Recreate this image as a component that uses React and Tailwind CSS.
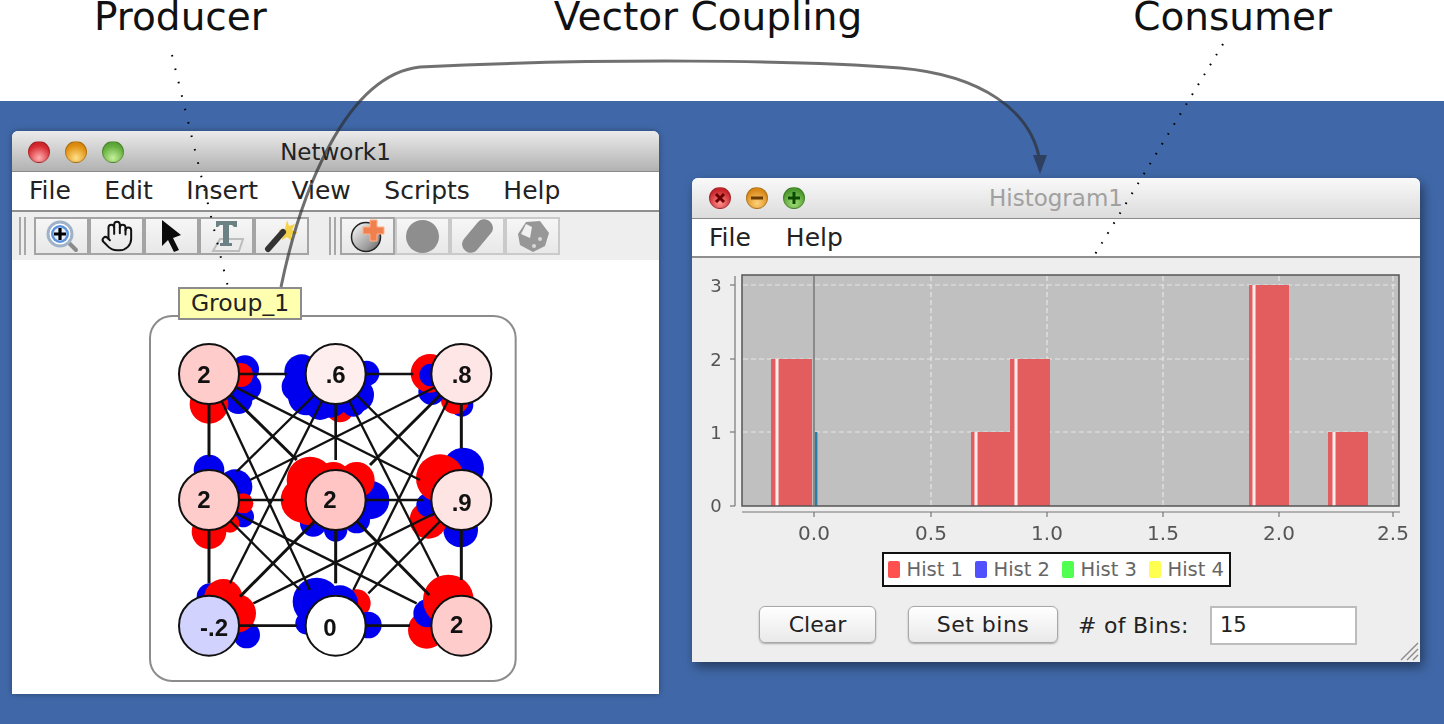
import React from "react";
import { Hand } from "lucide-react";

// node centres and drawing below are all in a 3x coordinate space (viewBox 1170x1140)
const nodes = [
  { x: 207, y: 192, fill: "#ffcccc", label: "2", tx: 192, ty: 218 },
  { x: 587, y: 192, fill: "#ffeeee", label: ".6", tx: 587, ty: 218 },
  { x: 964, y: 192, fill: "#ffe6e6", label: ".8", tx: 965, ty: 218 },
  { x: 207, y: 570, fill: "#ffcccc", label: "2", tx: 192, ty: 595 },
  { x: 587, y: 570, fill: "#ffc4c4", label: "2", tx: 570, ty: 595 },
  { x: 964, y: 570, fill: "#ffe4e4", label: ".9", tx: 965, ty: 602 },
  { x: 207, y: 947, fill: "#d2d2ff", label: "-.2", tx: 222, ty: 978 },
  { x: 587, y: 947, fill: "#ffffff", label: "0", tx: 570, ty: 978 },
  { x: 964, y: 947, fill: "#ffcccc", label: "2", tx: 950, ty: 970 },
];

const R = "#ff0000";
const B = "#0000ee";

const blobs = [
  [B, 315, 178, 42], [B, 322, 232, 42], [B, 295, 270, 42], [R, 303, 195, 36], [R, 207, 283, 58],
  [R, 600, 295, 42], [B, 485, 185, 52], [B, 470, 230, 45], [B, 500, 260, 56], [B, 540, 285, 45], [B, 570, 265, 58], [B, 640, 285, 35], [B, 650, 255, 52], [B, 680, 190, 38],
  [B, 965, 285, 35], [R, 945, 270, 42], [B, 875, 245, 40], [R, 870, 190, 58], [B, 872, 195, 34],
  [B, 207, 480, 46], [B, 285, 530, 52], [B, 310, 620, 32], [R, 310, 580, 30], [R, 270, 640, 28], [R, 207, 665, 52],
  [B, 690, 570, 58], [B, 520, 640, 40], [B, 587, 660, 35], [B, 650, 630, 40], [R, 510, 510, 70], [R, 490, 570, 68], [R, 505, 595, 50], [R, 650, 510, 54], [R, 580, 510, 54],
  [B, 970, 475, 62], [B, 962, 660, 52], [R, 865, 630, 56], [B, 865, 585, 36], [R, 900, 505, 72],
  [B, 210, 860, 40], [B, 320, 975, 40], [R, 250, 865, 58], [R, 290, 910, 58],
  [R, 650, 880, 42], [B, 530, 875, 72], [B, 600, 880, 54], [B, 500, 940, 34], [B, 685, 945, 40],
  [R, 860, 960, 56], [B, 862, 910, 42], [R, 925, 870, 76],
];

// x1, y1, x2, y2, width
const edges = [
  [207, 192, 440, 192, 8], [587, 192, 820, 192, 8], [207, 570, 430, 570, 8], [587, 570, 850, 570, 8],
  [207, 947, 470, 947, 8], [587, 947, 810, 947, 8], [207, 192, 207, 440, 9], [207, 570, 207, 820, 9],
  [587, 192, 587, 450, 8], [587, 570, 587, 820, 9], [964, 192, 964, 415, 9], [964, 570, 964, 810, 9],
  [207, 192, 470, 450, 9], [207, 192, 840, 510, 7], [207, 192, 510, 840, 7], [587, 192, 290, 485, 7],
  [587, 192, 835, 440, 7], [587, 192, 270, 820, 7], [587, 192, 895, 800, 7], [964, 192, 330, 510, 7],
  [964, 192, 690, 465, 9], [964, 192, 640, 840, 7], [207, 570, 480, 840, 7], [207, 570, 830, 880, 7],
  [587, 570, 300, 860, 9], [587, 570, 868, 855, 9], [964, 570, 340, 880, 7], [964, 570, 685, 850, 7],
];

const bars = [
  { x: 771, w: 41, top: 359, stripe: 776 },
  { x: 971, w: 39, top: 432, stripe: 975 },
  { x: 1010, w: 40, top: 359, stripe: 1015 },
  { x: 1249, w: 40, top: 285, stripe: 1253 },
  { x: 1328, w: 40, top: 432, stripe: 1333 },
];

const xTicks = [
  [814, "0.0"], [931, "0.5"], [1047, "1.0"], [1163, "1.5"], [1279, "2.0"], [1393, "2.5"],
];
const yTicks = [[285, "3", 292], [359, "2", 366], [432, "1", 439], [506, "0", 512]];

const legend = [
  ["Hist 1", "bg-[#ff5050]"], ["Hist 2", "bg-[#5050ff]"], ["Hist 3", "bg-[#50ff50]"], ["Hist 4", "bg-[#ffff50]"],
];

const Network = () => (
  <svg viewBox="0 0 1170 1140" className="w-[390px] h-[380px] blur-[0.4px]">
    <rect x="30" y="18" width="1097" height="1095" rx="66" fill="#fff" stroke="#8c8c8c" strokeWidth="6" />
    {blobs.map(([c, x, y, r], i) => <circle key={i} cx={x} cy={y} r={r} fill={c} />)}
    {edges.map(([x1, y1, x2, y2, w], i) => <line key={i} x1={x1} y1={y1} x2={x2} y2={y2} stroke="#111" strokeWidth={w} />)}
    {nodes.map((n, i) => (
      <g key={i}>
        <circle cx={n.x} cy={n.y} r="90" fill={n.fill} stroke="#111" strokeWidth="6" />
        <text x={n.tx} y={n.ty} textAnchor="middle" fontSize="72" fontWeight="700" fill="#111" fontFamily="'Liberation Sans', sans-serif">{n.label}</text>
      </g>
    ))}
  </svg>
);

const Plot = () => (
  <svg viewBox="692 258 728 292" className="w-[728px] h-[292px] blur-[0.4px]" fontFamily="'DejaVu Sans', sans-serif">
    <rect x="742" y="275" width="657" height="231" fill="#c0c0c0" />
    {[285, 359, 432].map((y) => <line key={y} x1="743" x2="1398" y1={y} y2={y} stroke="#e6e6e6" strokeWidth="1.2" strokeDasharray="5 3" />)}
    {[931, 1047, 1163, 1279, 1393].map((x) => <line key={x} x1={x} x2={x} y1="276" y2="505" stroke="#e6e6e6" strokeWidth="1.2" strokeDasharray="5 3" />)}
    <line x1="814" x2="814" y1="276" y2="505" stroke="#666" strokeWidth="1.2" />
    {bars.map((b) => (
      <g key={b.x}>
        <rect x={b.x} y={b.top} width={b.w} height={506 - b.top} fill="#e35d5f" />
        <rect x={b.stripe - 1} y={b.top} width="4" height={506 - b.top} fill="#f0a8a8" />
        <rect x={b.stripe} y={b.top} width="2" height={506 - b.top} fill="#fdecec" />
      </g>
    ))}
    <rect x="815" y="432" width="2.4" height="74" fill="#2a7fa8" />
    <rect x="742" y="275" width="657" height="231" fill="none" stroke="#555" strokeWidth="1.5" />
    <line x1="735" x2="735" y1="276" y2="506" stroke="#777" strokeWidth="1.2" />
    <line x1="742" x2="1400" y1="512" y2="512" stroke="#777" strokeWidth="1.2" />
    {yTicks.map(([y, t, by]) => (
      <g key={t}>
        <line x1="730" x2="735" y1={y} y2={y} stroke="#777" strokeWidth="1.2" />
        <text x="716" y={by} textAnchor="middle" fontSize="18" fill="#555">{t}</text>
      </g>
    ))}
    {xTicks.map(([x, t]) => (
      <g key={t}>
        <line x1={x} x2={x} y1="512" y2="517" stroke="#777" strokeWidth="1.2" />
        <text x={x} y="540" textAnchor="middle" fontSize="20" fill="#555">{t}</text>
      </g>
    ))}
  </svg>
);

const ToolButton = ({ dim, children }) => (
  <div className={`w-[55px] h-[38px] border-2 flex items-center justify-center bg-gradient-to-b from-[#f6f6f6] to-[#e8e8e8] ${dim ? "border-[#cacaca]" : "border-[#a4a4a4]"}`}>
    {children}
  </div>
);

const Grip = () => (
  <div className="flex gap-[3px] h-[38px] mr-[8px]">
    <div className="w-[2px] bg-[#a8a8a8]" />
    <div className="w-[2px] bg-[#a8a8a8]" />
  </div>
);

const Light = ({ className, children }) => (
  <div className={`w-[22px] h-[22px] rounded-full border border-black/20 flex items-center justify-center ${className}`}>
    {children}
  </div>
);

const TitleBar = ({ title, lights, className, textClass }) => (
  <div className={`relative h-[41px] rounded-t-[6px] border-b border-[#8a8a8a] flex items-center ${className}`}>
    {lights}
    <span className={`absolute inset-x-0 text-center text-[23px] ${textClass}`}>{title}</span>
  </div>
);

const App = () => {
  return (
    <div className="relative w-[1444px] h-[724px] overflow-hidden bg-white font-['DejaVu_Sans',sans-serif]">
      <header className="h-[101px] flex items-start text-[39px] leading-[34px] text-[#111]">
        <span className="ml-[94px]">Producer</span>
        <span className="ml-[287px]">Vector Coupling</span>
        <span className="ml-[271px]">Consumer</span>
      </header>

      <main className="h-[623px] bg-[#4068a8] flex items-start pl-[12px] pt-[30px] gap-[33px]">
        <section className="w-[647px] h-[563px] flex flex-col bg-white shadow-[0_0_6px_rgba(0,0,0,0.35)] rounded-t-[6px]">
          <TitleBar
            title="Network1"
            className="bg-gradient-to-b from-[#ebebeb] to-[#b2b2b2]"
            textClass="text-[#222] pt-[2px]"
            lights={
              <div className="flex gap-[15px] pl-[16px] pt-[1px]">
                <Light className="bg-[radial-gradient(circle_at_50%_80%,#ffb0b0,#d62a30_65%,#b81e24)]" />
                <Light className="bg-[radial-gradient(circle_at_50%_80%,#ffe08a,#e0900f_65%,#c47c0c)]" />
                <Light className="bg-[radial-gradient(circle_at_50%_80%,#c6f09a,#62ad3c_65%,#4c9530)]" />
              </div>
            }
          />
          <nav className="h-[40px] border-b-2 border-[#8f8f8f] flex items-center gap-[33.5px] pl-[17px] text-[25px] text-[#222]">
            <span>File</span><span>Edit</span><span>Insert</span><span>View</span><span>Scripts</span><span>Help</span>
          </nav>
          <div className="h-[48px] bg-[#eeeeee] flex items-start pt-[5px] pl-[7px]">
            <Grip />
            <div className="flex">
              <ToolButton>
                <svg width="34" height="34" viewBox="0 0 34 34">
                  <line x1="22" y1="22" x2="31" y2="31" stroke="#8a8a8a" strokeWidth="4" strokeLinecap="round" />
                  <circle cx="15" cy="15" r="12" fill="#fff" stroke="#9fb2c8" strokeWidth="3" />
                  <circle cx="15" cy="15" r="9" fill="#5c93dc" />
                  <circle cx="15" cy="15" r="6.5" fill="#e8f0fb" />
                  <path d="M15 9v12M9 15h12" stroke="#000" strokeWidth="3.2" />
                </svg>
              </ToolButton>
              <ToolButton>
                <Hand size={34} strokeWidth={1.4} color="#111" />
              </ToolButton>
              <ToolButton>
                <svg width="26" height="34" viewBox="0 0 26 34">
                  <path d="M3 1 22 16 14 19 20 31 15 33 9 21 3 27Z" fill="#0b0b0b" />
                </svg>
              </ToolButton>
              <ToolButton>
                <svg width="36" height="34" viewBox="0 0 36 34">
                  <path d="M11 20h23l-4 12H4Z" fill="#ececec" stroke="#bdbdbd" strokeWidth="2" />
                  <path d="M7 2h21v6h-3l-2-2h-3v18h3v3H11v-3h3V6h-3L9 8H7Z" fill="#6c8184" />
                </svg>
              </ToolButton>
              <ToolButton>
                <svg width="36" height="34" viewBox="0 0 36 34">
                  <path d="M23 1l2 6 6-2-3 6 6 3-7 2 1 6-5-4-5 3 1-7-5-3 7-1Z" fill="#f3d24a" />
                  <path d="M4 30 19 13" stroke="#333" strokeWidth="6" strokeLinecap="round" />
                </svg>
              </ToolButton>
            </div>
            <div className="ml-[20px] flex">
              <Grip />
            </div>
            <div className="flex -ml-[4px]">
              <ToolButton>
                <svg width="36" height="34" viewBox="0 0 36 34">
                  <defs>
                    <linearGradient id="sph" x1="0" y1="0" x2="1" y2="1">
                      <stop offset="0" stopColor="#fff" />
                      <stop offset="0.7" stopColor="#999" />
                      <stop offset="1" stopColor="#555" />
                    </linearGradient>
                  </defs>
                  <circle cx="16" cy="18" r="14.5" fill="url(#sph)" stroke="#222" strokeWidth="1.5" />
                  <path d="M20 1h7v7h7v7h-7v7h-7v-7h-7V8h7Z" fill="#f0814f" stroke="#ffb089" strokeWidth="1" />
                </svg>
              </ToolButton>
              <ToolButton dim>
                <div className="w-[33px] h-[33px] rounded-full bg-[#8e8e8e]" />
              </ToolButton>
              <ToolButton dim>
                <div className="w-[17px] h-[38px] -my-2 rounded-[8px] rotate-[40deg] bg-[#8e8e8e]" />
              </ToolButton>
              <ToolButton dim>
                <svg width="34" height="34" viewBox="0 0 34 34">
                  <path d="M10 3 24 2 33 14 29 27 17 33 4 26 2 15Z" fill="#979797" />
                  <path d="M10 5 16 8 14 19 5 15Z" fill="#f0f0f0" />
                  <circle cx="24" cy="20" r="2" fill="#d8d8d8" />
                  <circle cx="18" cy="27" r="2" fill="#d8d8d8" />
                </svg>
              </ToolButton>
            </div>
          </div>
          <div className="relative flex-1 pl-[128px] pt-[50px] overflow-hidden">
            <Network />
            <div className="absolute left-[166px] top-[27px] w-[124px] h-[33px] bg-[#ffffb0] border-2 border-[#8c8c8c] flex items-center justify-center text-[23.5px] text-[#222]">
              Group_1
            </div>
          </div>
        </section>

        <section className="relative mt-[47px] w-[728px] h-[484px] flex flex-col bg-[#eeeeee] rounded-t-[6px] shadow-[3px_5px_12px_rgba(0,0,0,0.45)]">
          <TitleBar
            title="Histogram1"
            className="bg-gradient-to-b from-[#f9f9f9] to-[#dcdcdc]"
            textClass="text-[#a0a0a0]"
            lights={
              <div className="flex gap-[15px] pl-[17px]">
                <Light className="bg-[radial-gradient(circle_at_50%_75%,#ff8f8f,#c9262c_70%)]">
                  <svg width="12" height="12" viewBox="0 0 12 12"><path d="M2 2l8 8M10 2l-8 8" stroke="#6b0000" strokeWidth="3" /></svg>
                </Light>
                <Light className="bg-[radial-gradient(circle_at_50%_75%,#ffd27a,#d98a1a_70%)]">
                  <svg width="14" height="12" viewBox="0 0 14 12"><path d="M1 6h12" stroke="#6b3a00" strokeWidth="3" /></svg>
                </Light>
                <Light className="bg-[radial-gradient(circle_at_50%_75%,#a5e07a,#4c9a2e_70%)]">
                  <svg width="14" height="14" viewBox="0 0 14 14"><path d="M7 1v12M1 7h12" stroke="#0c4a00" strokeWidth="3" /></svg>
                </Light>
              </div>
            }
          />
          <nav className="h-[39px] bg-white border-b-2 border-[#8f8f8f] flex items-center gap-[35px] pl-[17px] text-[25px] text-[#222]">
            <span>File</span><span>Help</span>
          </nav>
          <Plot />
          <div className="mt-[2px] flex justify-center">
            <div className="w-[349px] h-[35px] bg-white border-2 border-[#111] flex items-center pl-[4px] text-[19.5px] text-[#666]">
              {legend.map(([name, color]) => (
                <div key={name} className="w-[87px] shrink-0 flex items-center gap-[7px] whitespace-nowrap">
                  <div className={`w-[12px] h-[17px] rounded-[2px] ${color}`} />
                  <span>{name}</span>
                </div>
              ))}
            </div>
          </div>
          <div className="mt-[19px] pl-[67px] flex items-start text-[22px] text-[#222]">
            <button className="w-[117px] h-[37px] rounded-[6px] border border-[#a8a8a8] bg-gradient-to-b from-white to-[#e9e9e9] shadow-[0_1px_2px_rgba(0,0,0,0.3)]">Clear</button>
            <button className="ml-[32px] w-[150px] h-[37px] rounded-[6px] border border-[#a8a8a8] bg-gradient-to-b from-white to-[#e9e9e9] shadow-[0_1px_2px_rgba(0,0,0,0.3)] tracking-[0.5px]">Set bins</button>
            <span className="ml-[20px] w-[110px] h-[37px] leading-[39px] whitespace-nowrap tracking-[0.3px]">{"# of Bins:"}</span>
            <div className="ml-[22px] w-[147px] h-[39px] bg-white border-2 border-[#bcbcbc] flex items-center pl-[8px] text-[21px]">15</div>
          </div>
          <svg className="absolute right-[1px] bottom-[1px]" width="20" height="20" viewBox="0 0 20 20">
            <path d="M2 19 19 2M8 19 19 8M14 19 19 14" stroke="#8a8a8a" strokeWidth="1.4" />
          </svg>
        </section>
      </main>

      {/* annotation lines lie over both windows */}
      <svg className="absolute inset-0 pointer-events-none" width="1444" height="724" viewBox="0 0 1444 724" fill="none">
        <path d="M172 55 228 287" stroke="#000" strokeWidth="2" strokeDasharray="1.6 12.2" />
        <path d="M1223 44 1094 256" stroke="#000" strokeWidth="2" strokeDasharray="1.6 10" />
        <path d="M281 287C300 195 345 75 420 67 600 58 800 60 900 68 980 75 1032 110 1040 162" stroke="#2c2c2c" strokeOpacity="0.68" strokeWidth="3" />
        <path d="M1033 155 1047 155 1040 174Z" fill="#2e3f60" />
      </svg>
    </div>
  );
};

export default App;
